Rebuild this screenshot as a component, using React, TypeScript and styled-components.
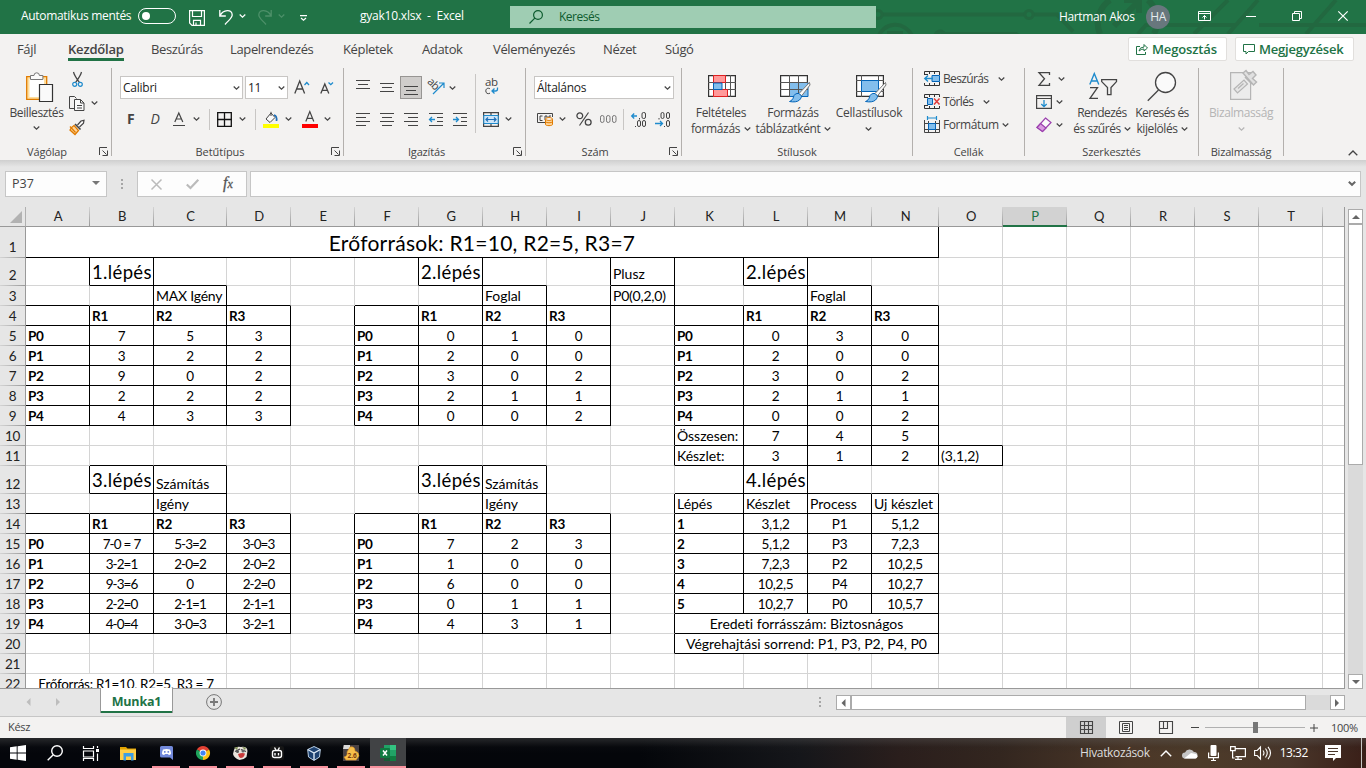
import React from 'react';
import styled, { createGlobalStyle, css } from 'styled-components';

const Global = createGlobalStyle`
  * { box-sizing: border-box; }
  body { margin: 0; overflow: hidden; font-family: "Open Sans", "Noto Sans", sans-serif; font-size: 12px; color: #444; }
  svg { display: block; flex: none; }
`;

/* ---------- shared parts ---------- */

const Window = styled.div`
  width: 1366px;
  height: 768px;
  display: flex;
  flex-direction: column;
  background: #e6e6e6;
  overflow: hidden;
`;

const Text = styled.span<{ $ml?: number; $mt?: number; $size?: number; $ls?: number; $weight?: number; $color?: string; $lh?: number }>`
  flex: none;
  white-space: pre;
  margin-left: ${(p) => p.$ml ?? 0}px;
  margin-top: ${(p) => p.$mt ?? 0}px;
  font-size: ${(p) => p.$size ?? 12}px;
  letter-spacing: ${(p) => p.$ls ?? -0.25}px;
  font-weight: ${(p) => p.$weight ?? 400};
  line-height: ${(p) => p.$lh ?? 16}px;
  color: ${(p) => p.$color ?? 'inherit'};
`;

const Glyph = styled.svg<{ $ml?: number; $mt?: number; $color?: string }>`
  margin-left: ${(p) => p.$ml ?? 0}px;
  margin-top: ${(p) => p.$mt ?? 0}px;
  overflow: visible;
  fill: none;
  stroke: ${(p) => p.$color ?? '#444'};
  stroke-width: 1;
`;

type IconProps = { w: number; h: number; ml?: number; mt?: number; color?: string; children: React.ReactNode };
const Icon = ({ w, h, ml, mt, color, children }: IconProps) => (
  <Glyph width={w} height={h} viewBox={`0 0 ${w} ${h}`} $ml={ml} $mt={mt} $color={color}>
    {children}
  </Glyph>
);

const Chevron = ({ ml, mt, color }: { ml?: number; mt?: number; color?: string }) => (
  <Icon w={7} h={4} ml={ml} mt={mt} color={color}>
    <path d="M.7.5 3.5 3.2 6.3.5" strokeWidth="1.2" />
  </Icon>
);

/* ---------- title bar ---------- */

const TitleBar = styled.header`
  height: 34px;
  flex: none;
  display: flex;
  align-items: center;
  background: #217346;
  color: #fff;
  position: relative;
`;

const Circuit = styled.svg`
  position: absolute;
  left: 876px;
  top: 0;
  overflow: hidden;
  fill: none;
  stroke: #226840;
`;

const TitlePart = styled.div<{ $w: number; $pl?: number; $pb?: number }>`
  width: ${(p) => p.$w}px;
  height: 34px;
  flex: none;
  display: flex;
  align-items: center;
  padding-left: ${(p) => p.$pl ?? 0}px;
  padding-bottom: ${(p) => p.$pb ?? 0}px;
  position: relative;
`;

const AutoSave = styled.div`
  width: 117px;
  flex: none;
  display: flex;
`;

const Toggle = styled.div`
  width: 38px;
  height: 16px;
  flex: none;
  border: 1px solid #fff;
  border-radius: 8px;
  padding: 3px 3px;
  &::before {
    content: '';
    display: block;
    width: 8px;
    height: 8px;
    border-radius: 50%;
    background: #fff;
  }
`;

const SearchBox = styled.div`
  width: 366px;
  height: 22px;
  flex: none;
  display: flex;
  align-items: center;
  padding-left: 19px;
  background: #9fcdb3;
  color: #0e5c2f;
  position: relative;
`;

const UserName = styled.div`
  width: 76px;
  flex: none;
  display: flex;
`;

const Avatar = styled.div`
  width: 24px;
  height: 24px;
  margin-left: 11px;
  border-radius: 50%;
  background: #68777d;
  display: flex;
  align-items: center;
  justify-content: center;
`;

/* ---------- tabs ---------- */

const TabRow = styled.nav`
  height: 32px;
  flex: none;
  display: flex;
  align-items: flex-start;
  background: #f3f2f1;
`;

const Tab = styled.div<{ $w: number; $active?: boolean; $ml: number }>`
  width: ${(p) => p.$w}px;
  margin-left: ${(p) => p.$ml}px;
  height: 27px;
  padding-top: 6px;
  flex: none;
  display: flex;
  ${(p) => p.$active && css`border-bottom: 3px solid #217346;`}
`;

const ShareButton = styled.div<{ $w: number; $ml: number }>`
  width: ${(p) => p.$w}px;
  height: 24px;
  margin: 3px 0 0 ${(p) => p.$ml}px;
  flex: none;
  display: flex;
  align-items: center;
  padding-left: 7px;
  background: #fff;
  border: 1px solid #e1dfdd;
  border-radius: 2px;
  color: #217346;
`;

/* ---------- ribbon ---------- */

const Ribbon = styled.section`
  height: 94px;
  flex: none;
  display: flex;
  background: #f3f2f1;
`;

const GroupBox = styled.div<{ $w: number }>`
  width: ${(p) => p.$w}px;
  height: 90px;
  flex: none;
  display: flex;
  flex-direction: column;
  position: relative;
  background: linear-gradient(#b3b0ad, #b3b0ad) right 2px / 1px 88px no-repeat;
  padding-right: 1px;
`;

const GroupBody = styled.div`
  height: 78px;
  flex: none;
  display: flex;
`;

const GroupFoot = styled.div<{ $lean: number }>`
  height: 16px;
  display: flex;
  justify-content: center;
  padding-right: ${(p) => p.$lean}px;
`;

const Launcher = styled.div`
  position: absolute;
  right: 4px;
  bottom: 0;
`;

const Stack = styled.div<{ $w?: number; $ml?: number; $pt?: number; $center?: boolean }>`
  display: flex;
  flex-direction: column;
  flex: none;
  ${(p) => p.$w !== undefined && css`width: ${p.$w}px;`}
  margin-left: ${(p) => p.$ml ?? 0}px;
  padding-top: ${(p) => p.$pt ?? 0}px;
  ${(p) => p.$center && css`align-items: center;`}
`;

const Row = styled.div<{ $h: number; $pl?: number; $mt?: number }>`
  height: ${(p) => p.$h}px;
  margin-top: ${(p) => p.$mt ?? 0}px;
  padding-left: ${(p) => p.$pl ?? 0}px;
  display: flex;
  align-items: center;
  flex: none;
`;

const Combo = styled.div<{ $w: number; $ml?: number }>`
  width: ${(p) => p.$w}px;
  height: 23px;
  margin-left: ${(p) => p.$ml ?? 0}px;
  flex: none;
  display: flex;
  align-items: center;
  justify-content: space-between;
  padding: 0 2px;
  background: #fff;
  border: 1px solid #c8c6c4;
  color: #222;
`;

const Rule = styled.div<{ $h: number; $ml?: number; $mt?: number }>`
  width: 1px;
  height: ${(p) => p.$h}px;
  margin-left: ${(p) => p.$ml ?? 0}px;
  margin-top: ${(p) => p.$mt ?? 0}px;
  background: #c8c6c4;
  flex: none;
`;

const Pressed = styled.div`
  width: 22px;
  height: 23px;
  margin-left: 6px;
  border: 1px solid #979593;
  background: #cfcdcb;
  padding: 9px 0 0 3px;
  flex: none;
`;

type GroupProps = { w: number; label: string; lean?: number; launcher?: boolean; ls?: number; children: React.ReactNode };
const Group = ({ w, label, lean = 0, launcher, ls = -0.15, children }: GroupProps) => (
  <GroupBox $w={w}>
    <GroupBody>{children}</GroupBody>
    <GroupFoot $lean={lean}><Text $size={11} $ls={ls}>{label}</Text></GroupFoot>
    {launcher && (
      <Launcher>
        <Icon w={9} h={9}><path d="M.5 8V.5H8M3.5 3.5l4 4M8.5 3.5v5h-5" /></Icon>
      </Launcher>
    )}
  </GroupBox>
);

const lines = (ws: number[], step = 4, left = false) =>
  ws.map((w, i) => <path key={i} d={`M${left ? 0 : (14 - w) / 2} ${i * step + 0.5}h${w}`} />);

const Brush = () => (
  <g>
    <path d="M29.5 7.5 19 18.5l2.5 2.5L30 10Z" fill="#fafafa" stroke="#777" />
    <path d="M19 18.5c-3-.5-5 1-5.5 3.5-.5 2.5-2 3.5-4 4.5 4 .8 8 .5 10-1.5 1.5-1.5 2-3 2-4Z" fill="#83beec" stroke="#0364b8" />
  </g>
);

const RibbonGroups = () => (
  <Ribbon>
    <Group w={112} label="Vágólap" lean={17} launcher>
      <Stack $w={53} $ml={10} $pt={6} $center>
        <Icon w={27} h={30} ml={6}>
          <path d="M.7 4.7h20v22.6H.7Z" fill="#ffdf9e" stroke="#e07b00" strokeWidth="1.3" />
          <path d="M3.5 7h14.5v18H3.5Z" fill="#fff" stroke="none" />
          <path d="M4.5 3.5h3.5a2.7 2.7 0 0 1 5.4 0h3.5v4h-12.4Z" fill="#fafafa" stroke="#777" />
          <path d="M13.5 12.5h13v17h-13Z" fill="#fafafa" stroke="#333" strokeWidth="1.2" />
        </Icon>
        <Text $ls={-0.4} $lh={22}>Beillesztés</Text>
        <Chevron mt={2} />
      </Stack>
      <Stack $ml={6} $pt={5}>
        <Icon w={11} h={16} ml={3}>
          <path d="M1.500 1c1 4 3.500 7 6 10.500M9.500 1c-1 4-3.500 7-6 10.500" strokeWidth="1.2" />
          <circle cx="2.7" cy="13.3" r="2" stroke="#1e8bcd" strokeWidth="1.2" />
          <circle cx="8.3" cy="13.3" r="2" stroke="#1e8bcd" strokeWidth="1.2" />
        </Icon>
        <Row $h={16} $mt={8}>
          <Icon w={16} h={15}>
            <path d="M5 12.5H.5V.5h5l2 2" /><path d="M5.5 3.5h6l3.5 3.5v7.5H5.5Z" fill="#fafafa" />
            <path d="M11.5 3.5v3.5h3.5M8 9.5h5M8 12h5" />
          </Icon>
          <Chevron ml={6} />
        </Row>
        <Icon w={16} h={16} mt={8}>
          <path d="m8.5 6 3.5-4 3-.7-.5 3-4 3.7" fill="#fafafa" strokeWidth="1.2" />
          <path d="m6 5 5.5 5.5" strokeWidth="1.6" />
          <path d="m5 6.5 4.5 5L6 15.5 1 11c1-2 1.5-3 4-4.5Z" fill="#ffd59a" stroke="#e07b00" strokeWidth="1.3" />
          <path d="m1 7.5 5.5 6" stroke="#e07b00" strokeWidth="1.3" />
        </Icon>
      </Stack>
    </Group>

    <Group w={232} label="Betűtípus" lean={15} launcher ls={-0.05}>
      <Stack $ml={8} $pt={10}>
        <Row $h={23}>
          <Combo $w={123}><Text>Calibri</Text><Chevron /></Combo>
          <Combo $w={43} $ml={2}><Text>11</Text><Chevron /></Combo>
          <Icon w={16} h={14} ml={6} mt={-2}>
            <path d="m.8 13.5 4.9-12.5 4.9 12.5M2.5 9h6.5" strokeWidth="1.3" /><path d="m10.5 5 2.3-2.5L15 5" stroke="#1e8bcd" strokeWidth="1.3" />
          </Icon>
          <Icon w={13} h={13} ml={10} mt={-1}>
            <path d="m.8 12.5 4-9.5 4 9.5M2.2 9.3h5.2" strokeWidth="1.3" /><path d="m8.5 1.5 2.3 2.2 2.2-2.2" stroke="#1e8bcd" strokeWidth="1.3" />
          </Icon>
        </Row>
        <Row $h={22} $mt={9}>
          <Text $ml={7} $size={14} $weight={700}>F</Text>
          <Text $ml={16} $size={14} $lh={18}><i>D</i></Text>
          <Icon w={12} h={14} ml={13}><path d="m1.8 10 4-9 4 9M3.2 7h5.2M0 13.5h12" strokeWidth="1.2" /></Icon>
          <Chevron ml={8} />
          <Rule $h={21} $ml={9} />
          <Icon w={15} h={15} ml={7}><path d="M.7.7h13.6v13.6H.7ZM7.5 0v15M0 7.5h15" stroke="#111" strokeWidth="1.3" /></Icon>
          <Chevron ml={7} />
          <Rule $h={21} $ml={9} />
          <Icon w={16} h={17} ml={7}>
            <path d="m3 8 5-6 4 4.5-5 5Z" fill="#fafafa" /><path d="M8 5V.8" />
            <path d="M11 4c2 .5 3 2.5 2.5 6" stroke="#1e6fb8" strokeWidth="1.7" />
            <path d="M0 13h16v4H0Z" fill="#ff0" stroke="none" />
          </Icon>
          <Chevron ml={6} />
          <Icon w={16} h={17} ml={10}>
            <path d="m3.8 10.5 4-10 4 10M5.2 7.3h5.2" strokeWidth="1.2" /><path d="M0 13h16v4H0Z" fill="#f00" stroke="none" />
          </Icon>
          <Chevron ml={6} />
        </Row>
      </Stack>
    </Group>

    <Group w={182} label="Igazítás" lean={16} launcher>
      <Stack $ml={12} $pt={10}>
        <Row $h={23}>
          <Icon w={14} h={14} mt={-2}>{lines([14, 10, 14])}</Icon>
          <Icon w={14} h={9} ml={10}>{lines([14, 10, 14])}</Icon>
          <Pressed><Icon w={14} h={9}>{lines([14, 10, 14])}</Icon></Pressed>
          <Icon w={17} h={17} ml={6}>
            <g transform="rotate(45 5 6)"><text x="-1.5" y="8.5" fontSize="11" letterSpacing="-.5" fill="#444" stroke="none">ab</text></g>
            <path d="M5 15 15.5 4.5M11 4h5v5" stroke="#1e8bcd" strokeWidth="1.2" />
          </Icon>
          <Chevron ml={4} />
        </Row>
        <Row $h={22} $mt={9}>
          <Icon w={14} h={13}>{lines([14, 10, 14, 10], 4, true)}</Icon>
          <Icon w={14} h={13} ml={10}>{lines([14, 10, 14, 10])}</Icon>
          <Icon w={14} h={13} ml={10}><path d="M0 .5h14M4 4.5h10M0 8.5h14M4 12.5h10" /></Icon>
          <Icon w={14} h={13} ml={11}><path d="M0 .5h14M8 4.5h6M8 8.5h6M0 12.5h14" /><path d="M6 6.5H.8M3 4 .5 6.5 3 9" stroke="#1e8bcd" strokeWidth="1.3" /></Icon>
          <Icon w={14} h={13} ml={10}><path d="M0 .5h14M8 4.5h6M8 8.5h6M0 12.5h14" /><path d="M0 6.5h5.2M3 4l2.5 2.5L3 9" stroke="#1e8bcd" strokeWidth="1.3" /></Icon>
        </Row>
      </Stack>
      <Rule $h={59} $ml={8} $mt={8} />
      <Stack $ml={7} $pt={12}>
        <Icon w={16} h={17} ml={2}>
          <text x="0" y="8" fontSize="11.5" letterSpacing="-.3" fill="#444" stroke="none">ab</text>
          <path d="M5 10.8C2.8 9.5.8 10.7.8 13s2 3.3 4.2 2.2" />
          <path d="M12.5 9.5v1.5q0 2-2 2H7M9.5 10.5 7 13l2.5 2.5" stroke="#1e8bcd" strokeWidth="1.3" />
        </Icon>
        <Row $h={22} $mt={13}>
          <Icon w={16} h={15}>
            <path d="M.6.6h14.8v13.8H.6ZM8 0v3M8 12v3" strokeWidth="1.2" />
            <path d="M.8 3.5h14.4v8H.8Z" fill="#cfe6f8" stroke="#1e8bcd" />
            <path d="M3 7.5h10M5 5.5l-2 2 2 2M11 5.5l2 2-2 2" stroke="#1e6fb8" strokeWidth="1.2" />
          </Icon>
          <Chevron ml={6} />
        </Row>
      </Stack>
    </Group>

    <Group w={156} label="Szám" lean={17} launcher>
      <Stack $ml={8} $pt={10}>
        <Row $h={23}><Combo $w={140}><Text>Általános</Text><Chevron /></Combo></Row>
        <Row $h={22} $mt={9}>
          <Icon w={17} h={14} ml={3}>
            <path d="M8 10.5H.5v-9h15V5" /><path d="M5.5 4H3v4.5h2.5M8 8V4h2v4M12 7V4h2" />
            <path d="M8.5 7v5.5c0 1.5 7 1.5 7 0V7" fill="#ffd59a" stroke="#e07b00" />
            <ellipse cx="12" cy="7" rx="3.5" ry="1.4" fill="#fff" stroke="#e07b00" />
            <path d="M8.5 9.8c1 1.3 6 1.3 7 0" stroke="#e07b00" />
          </Icon>
          <Chevron ml={5} />
          <Icon w={16} h={14} ml={10}>
            <circle cx="3.8" cy="3.8" r="2.9" strokeWidth="1.3" /><circle cx="12.2" cy="10.2" r="2.9" strokeWidth="1.3" /><path d="M12.5.5 3.5 13.5" strokeWidth="1.2" />
          </Icon>
          <Icon w={17} h={8} ml={8} color="#777"><rect x=".5" y=".5" width="3.5" height="7" rx="1.7" /><rect x="6.5" y=".5" width="3.5" height="7" rx="1.7" /><rect x="12.5" y=".5" width="3.5" height="7" rx="1.7" /></Icon>
          <Rule $h={21} $ml={6} />
          <Icon w={16} h={15} ml={7}>
            <path d="M6 4H.8M3.2 1.5.7 4l2.5 2.5" stroke="#1e8bcd" strokeWidth="1.3" />
            <path d="M8.5 6v1.5M4.5 14v1" /><rect x="11" y=".5" width="3.5" height="6" rx="1.5" /><rect x="6.5" y="8.5" width="3" height="6" rx="1.5" /><rect x="11.5" y="8.5" width="3" height="6" rx="1.5" />
          </Icon>
          <Icon w={16} h={15} ml={8}>
            <path d="M0 11.5h7M5 9l2.5 2.5L5 14" stroke="#1e8bcd" strokeWidth="1.3" />
            <path d="M4 6v1.5M9.5 14v1" /><rect x="6" y=".5" width="3" height="6" rx="1.5" /><rect x="11.5" y=".5" width="3" height="6" rx="1.5" /><rect x="11.5" y="8.5" width="3" height="6" rx="1.5" />
          </Icon>
        </Row>
      </Stack>
    </Group>

    <Group w={231} label="Stílusok" ls={-0.05}>
      <Stack $w={62} $ml={8} $pt={9} $center>
        <Icon w={28} h={22} ml={2}>
          <path d="M.6.6h26.8v20.8H.6Z" fill="#fff" stroke="#333" strokeWidth="1.2" />
          <path d="M0 7.5h28M0 14.5h28M5.5 0v22M17.5 0v22M22.5 0v22" stroke="#555" />
          <path d="M5.5.5h12v7h-12ZM5.5 14.5h14v7h-14Z" fill="#ff9a9a" stroke="#e02020" />
          <path d="M5.5 8h8.5v6.5h-8.5Z" fill="#83beec" stroke="#0364b8" />
        </Icon>
        <Text $mt={8} $ls={-0.3}>Feltételes</Text>
        <Row $h={16}><Text $ls={-0.35}>formázás</Text><Chevron ml={4} /></Row>
      </Stack>
      <Stack $w={76} $ml={3} $pt={9} $center>
        <Icon w={30} h={27} ml={4}>
          <path d="M.6.6h26.8v20.8H.6Z" fill="#fff" stroke="#333" strokeWidth="1.2" />
          <path d="M9.5 7.5H28v14H9.5Z" fill="#83beec" stroke="#0364b8" />
          <path d="M0 7.5h28M0 14.5h28M9.5 0v22M18.5 0v22" stroke="#555" />
          <Brush />
        </Icon>
        <Text $mt={3} $ls={-0.35}>Formázás</Text>
        <Row $h={16}><Text $ls={-0.35}>táblázatként</Text><Chevron ml={3} /></Row>
      </Stack>
      <Stack $w={68} $ml={4} $pt={9} $center>
        <Icon w={30} h={27} ml={3}>
          <path d="M.6.6h26.8v20.8H.6Z" fill="#fff" stroke="#333" strokeWidth="1.2" />
          <path d="M0 5.5h28M0 16.5h28M5.5 0v22M22.5 0v22" stroke="#555" />
          <path d="M5.5 5.5h17v11h-17Z" fill="#83beec" stroke="#0364b8" />
          <Brush />
        </Icon>
        <Text $mt={3} $ls={-0.25}>Cellastílusok</Text>
        <Chevron mt={6} ml={-1} />
      </Stack>
    </Group>

    <Group w={112} label="Cellák">
      <Stack $ml={11} $pt={4}>
        <Row $h={17}>
          <Icon w={16} h={15}>
            <path d="M.5 3V.5h15V4M.5 12v2.5h15V11M5.5 1v2M10.5 1v2M5.5 12v2M10.5 12v2M0 3.5h4" stroke="#333" />
            <path d="M8 4.5h7.5v6H8Z" fill="#83beec" stroke="#0364b8" /><path d="M9 7.5H.8M4 4.5.8 7.5l3.2 3" stroke="#1e8bcd" strokeWidth="1.4" />
          </Icon>
          <Text $ml={3} $ls={-0.65}>Beszúrás</Text><Chevron ml={10} />
        </Row>
        <Row $h={17} $mt={6}>
          <Icon w={16} h={15}>
            <path d="M.5 3V.5h15V3M.5 12v2.5h15V12M5.5 1v2M10.5 1v2M5.5 12v2M10.5 12v2M0 3.5h4M0 11.5h4" stroke="#333" />
            <path d="M3.5 4.5h5v6h-5Z" fill="#83beec" stroke="#0364b8" /><path d="m10 4.5 5.5 6M15.5 4.5l-5.5 6" stroke="#e03a3a" strokeWidth="1.5" />
          </Icon>
          <Text $ml={3} $ls={-0.65}>Törlés</Text><Chevron ml={10} />
        </Row>
        <Row $h={17} $mt={6}>
          <Icon w={16} h={17}>
            <path d="M3.5 2h9M3.5 0v4M12.5 0v4" stroke="#1e8bcd" strokeWidth="1.2" />
            <path d="M.5 4v12.5h15V4M0 7.5h16M0 13.5h16M4.5 5v11M11.5 5v11" stroke="#444" />
            <path d="M4.5 7.5h7v6h-7Z" fill="#83beec" stroke="#0364b8" />
          </Icon>
          <Text $ml={3} $ls={-0.4}>Formátum</Text><Chevron ml={3} />
        </Row>
      </Stack>
    </Group>

    <Group w={174} label="Szerkesztés" ls={-0.1}>
      <Stack $ml={11} $pt={4}>
        <Row $h={17}><Icon w={13} h={14} ml={2}><path d="M11.5 3V.7H1l5.5 6L1 13.3h10.5V11" strokeWidth="1.3" /></Icon><Chevron ml={7} /></Row>
        <Row $h={17} $mt={6}>
          <Icon w={16} h={14}><path d="M.6.6h14.8v12.8H.6ZM0 3.5h16" strokeWidth="1.2" /><path d="M8 5v7M5.3 9 8 11.7 10.7 9" stroke="#1e8bcd" strokeWidth="1.3" /></Icon>
          <Chevron ml={4} />
        </Row>
        <Row $h={17} $mt={6}>
          <Icon w={16} h={16} color="#9b3fae"><path d="M9.5 1 15 5.5 6.5 14.5 1 10.5Z" fill="#fafafa" strokeWidth="1.2" /><path d="m4.5 6.5 5.5 4.5-3.5 3.5L1 10.5Z" fill="#d99be0" strokeWidth="1.2" /></Icon>
          <Chevron ml={4} />
        </Row>
      </Stack>
      <Stack $w={58} $ml={8} $pt={7} $center>
        <Icon w={28} h={27} ml={1}>
          <path d="m.8 11.5 4.5-11 4.5 11M2.3 8h6" stroke="#1e8bcd" strokeWidth="1.4" />
          <path d="M1 14.6h7.5L1 25.4h8" strokeWidth="1.3" />
          <path d="M12.7 6.6h14.8v2l-5.5 6v7h-3.5v-7l-5.8-6Z" strokeWidth="1.3" />
        </Icon>
        <Text $mt={5} $ls={-0.5}>Rendezés</Text>
        <Row $h={16}><Text $ls={-0.45}>és szűrés</Text><Chevron ml={3} /></Row>
      </Stack>
      <Stack $w={58} $ml={2} $pt={6} $center>
        <Icon w={30} h={30}>
          <circle cx="18.5" cy="10.5" r="10" fill="#fafafa" strokeWidth="1.3" /><path d="M11.5 18 .8 28.8" strokeWidth="1.3" />
        </Icon>
        <Text $mt={3} $ls={-0.6}>Keresés és</Text>
        <Row $h={16}><Text $ls={-0.4}>kijelölés</Text><Chevron ml={3} /></Row>
      </Stack>
    </Group>

    <Group w={85} label="Bizalmasság" ls={-0.2}>
      <Stack $w={84} $pt={4} $center>
        <Icon w={28} h={30} ml={5} color="#b5b5b5">
          <path d="M.6 2.6h20v26.8H.6Z" fill="#ececec" strokeWidth="1.2" />
          <path d="m4 19 10-9 3.5 4-10 9ZM8 18.5l5.5-5" fill="#e6e6e6" strokeWidth="1.2" />
          <path d="m13 3 3-2.5 3 4 4-3 3 3.5-3.5 3.5 4 3.5-3 3Z" fill="#e0e0e0" strokeWidth="1.4" /><path d="m15 7 7 7" strokeWidth="1.5" />
        </Icon>
        <Text $mt={5} $ls={-0.4} $color="#b5b5b5">Bizalmasság</Text>
        <Chevron mt={6} color="#b5b5b5" />
      </Stack>
    </Group>
    <Icon w={10} h={6} ml={64} mt={84}><path d="M.7 5.3 5 1l4.3 4.3" strokeWidth="1.3" /></Icon>
  </Ribbon>
);

/* ---------- formula bar ---------- */

const FormulaBar = styled.div`
  height: 47px;
  flex: none;
  display: flex;
  padding: 11px 0 0 5px;
  background: linear-gradient(#cfcfcf, #e6e6e6 7px);
`;

const Field = styled.div<{ $w: number; $ml?: number; $pl?: number }>`
  width: ${(p) => p.$w}px;
  height: 26px;
  margin-left: ${(p) => p.$ml ?? 0}px;
  padding-left: ${(p) => p.$pl ?? 0}px;
  flex: none;
  display: flex;
  align-items: center;
  background: #fdfdfd;
  border: 1px solid #c6c6c6;
`;

const NameText = styled.div`
  width: 80px;
  flex: none;
  display: flex;
`;

const Fx = styled.span`
  margin-left: 24px;
  margin-top: -2px;
  font: italic 400 16px/18px "Liberation Serif", serif;
  -webkit-text-stroke: 0.3px #555;
  color: #555;
  small { font-size: 12px; }
`;

const Dots = ({ ml, mt }: { ml: number; mt: number }) => (
  <Icon w={2} h={10} ml={ml} mt={mt}><path d="M0 0h2v2H0ZM0 4h2v2H0ZM0 8h2v2H0Z" fill="#a6a6a6" stroke="none" /></Icon>
);

/* ---------- sheet ---------- */

const COLS: [string, number][] = [
  ['A', 64], ['B', 64], ['C', 73], ['D', 64], ['E', 64], ['F', 64], ['G', 64], ['H', 64], ['I', 64], ['J', 64],
  ['K', 69], ['L', 64], ['M', 64], ['N', 67], ['O', 64], ['P', 64], ['Q', 64], ['R', 64], ['S', 64], ['T', 64], ['', 22],
];
const ROWS = [31, 28, 20, 20, 20, 20, 20, 20, 20, 20, 20, 28, 20, 20, 20, 20, 20, 20, 20, 20, 20, 15];

const SheetArea = styled.div`
  height: 482px;
  flex: none;
  display: flex;
`;

const SheetBox = styled.div`
  width: 1345px;
  height: 482px;
  flex: none;
  border-bottom: 1px solid #999;
  border-right: 1px solid #999;
  overflow: hidden;
  background: #e6e6e6;
`;

const track = [26, ...COLS.map((c) => c[1])].map((w) => `${w}px`).join(' ');

const Grid = styled.div`
  display: grid;
  grid-template-columns: ${track};
  grid-template-rows: 20px ${ROWS.map((h) => `${h}px`).join(' ')};
  font-family: Lato, sans-serif;
  font-size: 13.5px;
  letter-spacing: -0.3px;
  color: #000;
`;

const ColHead = styled.div<{ $active?: boolean }>`
  display: flex;
  align-items: flex-start;
  justify-content: center;
  font-size: 13px;
  line-height: 18px;
  background: linear-gradient(#d4d4d4, #999) right / 1px 100% no-repeat, ${(p) => (p.$active ? '#d2d2d2' : '#e6e6e6')};
  border-bottom: ${(p) => (p.$active ? '2px solid #217346' : '1px solid #999')};
  color: ${(p) => (p.$active ? '#217346' : '#222')};
`;

const Corner = styled.div`
  border-right: 1px solid #b0b0b0;
  border-bottom: 1px solid #999;
  display: flex;
  align-items: flex-end;
  justify-content: flex-end;
  padding: 0 3px 3px 0;
  &::after {
    content: '';
    border-left: 12px solid transparent;
    border-bottom: 12px solid #b2b2b2;
  }
`;

const RowHead = styled.div<{ $clip?: boolean; $lift?: number }>`
  display: flex;
  align-items: ${(p) => (p.$clip ? 'flex-start' : 'flex-end')};
  justify-content: center;
  line-height: 18px;
  background: linear-gradient(to right, #d4d4d4, #999) bottom / 100% ${(p) => (p.$clip ? 0 : 1)}px no-repeat, #e6e6e6;
  border-right: 1px solid #999;
  padding-bottom: ${(p) => (p.$clip ? 0 : 1 + (p.$lift ?? 0))}px;
  padding-top: ${(p) => (p.$clip ? 1 : 0)}px;
  color: #222;
  overflow: hidden;
`;

type CellKind = 'word' | 'number' | 'formula' | 'step' | 'title';

const kinds = {
  word: css`font-size: 14px; letter-spacing: -0.03px;`,
  number: css`letter-spacing: -0.3px;`,
  formula: css`letter-spacing: -0.95px; word-spacing: 0.5px;`,
  step: css`font-size: 18.5px; line-height: 25px; letter-spacing: 0.35px;`,
  title: css`font-size: 21px; line-height: 28px; letter-spacing: 0.25px;`,
};

const Cell = styled.div<{ $r: boolean; $b: boolean; $center?: boolean; $bold?: boolean; $kind: CellKind; $tight?: boolean; $span: number; $clip?: boolean; $lift?: number }>`
  display: flex;
  align-items: ${(p) => (p.$clip ? 'flex-start' : 'flex-end')};
  justify-content: ${(p) => (p.$center ? 'center' : 'flex-start')};
  padding: ${(p) => (p.$clip ? 1 : 0)}px 0 ${(p) => p.$lift ?? 0}px ${(p) => (p.$center ? 0 : 2)}px;
  grid-column: span ${(p) => p.$span};
  background: #fff;
  border-right: 1px solid ${(p) => (p.$r ? '#000' : '#d4d4d4')};
  border-bottom: 1px solid ${(p) => (p.$b ? '#000' : '#d4d4d4')};
  white-space: pre;
  overflow: hidden;
  font-weight: ${(p) => (p.$bold ? 700 : 400)};
  line-height: 18px;
  ${(p) => kinds[p.$kind]}
  ${(p) => p.$tight && css`letter-spacing: -0.22px;`}
`;

type CellData = { t: string; bold?: boolean; center?: boolean; kind?: CellKind; tight?: boolean; span?: number };
const data: Record<string, CellData> = {};
const put = (col: string, row: number, t: string, o: Partial<CellData> = {}) => { data[col + row] = { t, ...o }; };
const value = (t: string): Partial<CellData> => ({ center: true, kind: t.includes('=') ? 'formula' : 'number' });

put('A', 1, 'Erőforrások: R1=10, R2=5, R3=7', { center: true, kind: 'title', span: 14 });
put('A', 22, 'Erőforrás: R1=10, R2=5, R3 = 7', { center: true, kind: 'number', span: 3 });
put('K', 19, 'Eredeti forrásszám: Biztosnágos', { center: true, kind: 'word', span: 4 });
put('K', 20, 'Végrehajtási sorrend: P1, P3, P2, P4, P0', { center: true, kind: 'word', span: 4 });
([['B', 2, '1'], ['G', 2, '2'], ['L', 2, '2'], ['B', 12, '3'], ['G', 12, '3'], ['L', 12, '4']] as [string, number, string][])
  .forEach(([c, r, n]) => put(c, r, `${n}.lépés`, { kind: 'step' }));
([['H3', 'Foglal'], ['M3', 'Foglal'], ['J2', 'Plusz'], ['C12', 'Számítás'], ['C13', 'Igény'],
  ['H12', 'Számítás'], ['H13', 'Igény'], ['K10', 'Összesen:'], ['K11', 'Készlet:'],
  ['K13', 'Lépés'], ['L13', 'Készlet'], ['M13', 'Process'], ['N13', 'Uj készlet']] as [string, string][])
  .forEach(([k, t]) => { data[k] = { t, kind: 'word' }; });
put('C', 3, 'MAX Igény', { kind: 'word', tight: true });
put('J', 3, 'P0(0,2,0)', { kind: 'word', tight: true });
put('O', 11, '(3,1,2)', { kind: 'word' });

const block = (cols: string, top: number, rows: string[][]) => {
  ['R1', 'R2', 'R3'].forEach((t, i) => put(cols[i + 1], top, t, { bold: true }));
  rows.forEach((vals, i) => {
    put(cols[0], top + 1 + i, `P${i}`, { bold: true });
    vals.forEach((v, j) => put(cols[j + 1], top + 1 + i, v, value(v)));
  });
};
const parse = (s: string) => s.split('/').map((r) => r.split('|'));
block('ABCD', 4, parse('7|5|3/3|2|2/9|0|2/2|2|2/4|3|3'));
block('FGHI', 4, parse('0|1|0/2|0|0/3|0|2/2|1|1/0|0|2'));
block('KLMN', 4, parse('0|3|0/2|0|0/3|0|2/2|1|1/0|0|2'));
block('ABCD', 14, parse('7-0 = 7|5-3=2|3-0=3/3-2=1|2-0=2|2-0=2/9-3=6|0|2-2=0/2-2=0|2-1=1|2-1=1/4-0=4|3-0=3|3-2=1'));
block('FGHI', 14, parse('7|2|3/1|0|0/6|0|0/0|1|1/4|3|1'));
parse('7|4|5/3|1|2').forEach((r, i) => r.forEach((v, j) => put('LMN'[j], 10 + i, v, value(v))));
parse('3,1,2|P1|5,1,2/5,1,2|P3|7,2,3/7,2,3|P2|10,2,5/10,2,5|P4|10,2,7/10,2,7|P0|10,5,7').forEach((r, i) => {
  put('K', 14 + i, String(i + 1), { bold: true });
  r.forEach((v, j) => put('LMN'[j], 14 + i, v, value(v)));
});

/* Outlined ranges: first column, first row, last column, last row. */
const OUTLINES: [string, number, string, number][] = [
  ['A', 1, 'N', 1], ['B', 2, 'B', 2], ['G', 2, 'G', 2], ['L', 2, 'L', 2], ['J', 2, 'J', 3], ['C', 3, 'C', 3], ['H', 3, 'H', 3], ['M', 3, 'M', 3],
  ['A', 4, 'D', 9], ['F', 4, 'I', 9], ['K', 4, 'N', 11], ['O', 11, 'O', 11], ['B', 12, 'C', 12], ['G', 12, 'H', 12], ['L', 12, 'L', 12],
  ['C', 13, 'C', 13], ['H', 13, 'H', 13], ['A', 14, 'D', 19], ['F', 14, 'I', 19], ['K', 13, 'N', 20],
];
const colIndex = (c: string) => c.charCodeAt(0) - 65;
const outlined = (c: number, r: number) =>
  OUTLINES.some(([c1, r1, c2, r2]) => c >= colIndex(c1) && c <= colIndex(c2) && r >= r1 && r <= r2);

const SheetRow = ({ row }: { row: number }) => {
  const cells: React.ReactNode[] = [];
  const clip = row === ROWS.length;
  for (let c = 0; c < COLS.length;) {
    const d = data[String.fromCharCode(65 + c) + row];
    const span = d?.span ?? 1;
    const last = c + span - 1;
    cells.push(
      <Cell key={c} $span={span} $center={d?.center} $bold={d?.bold} $kind={d?.kind ?? 'number'} $tight={d?.tight} $clip={clip}
        $lift={row === 2 && d?.kind === 'word' ? 2 : 0}
        $r={outlined(last, row) || outlined(last + 1, row)} $b={outlined(c, row) || outlined(c, row + 1)}>
        {d?.t}
      </Cell>,
    );
    c += span;
  }
  return <><RowHead $clip={clip} $lift={row <= 2 ? 1 : 0}>{row}</RowHead>{cells}</>;
};

const VScroll = styled.div`
  width: 15px;
  height: 480px;
  margin: 2px 0 0 3px;
  flex: none;
  display: flex;
  flex-direction: column;
  background: #dadada;
`;

const ScrollButton = styled.div`
  width: 15px;
  height: 15px;
  flex: none;
  display: flex;
  align-items: center;
  justify-content: center;
  background: #fff;
  border: 1px solid #ababab;
`;

const VThumb = styled.div`
  height: 241px;
  background: #fff;
  border: 1px solid #ababab;
  margin-bottom: auto;
`;

const HScroll = styled.div`
  width: 509px;
  height: 15px;
  margin: 6px 0 0 15px;
  flex: none;
  display: flex;
  background: #dadada;
`;

const HThumb = styled.div`
  width: 455px;
  background: #fff;
  border: 1px solid #ababab;
  margin-right: auto;
`;

const Arrow = ({ d, ml, mt, color = '#666' }: { d: 'up' | 'down' | 'left' | 'right'; ml?: number; mt?: number; color?: string }) => {
  const shapes = { up: 'M0 4h8L4 0Z', down: 'M0 0h8L4 4Z', left: 'M4.5 0v8L.5 4Z', right: 'M0 0v8l4-4Z' };
  const v = d === 'up' || d === 'down';
  return <Icon w={v ? 8 : 5} h={v ? 4 : 8} ml={ml} mt={mt}><path d={shapes[d]} fill={color} stroke="none" /></Icon>;
};

const SheetTabs = styled.div`
  height: 28px;
  flex: none;
  display: flex;
  border-bottom: 1px solid #c6c6c6;
`;

const SheetTab = styled.div`
  width: 73px;
  height: 25px;
  margin: -1px 0 0 39px;
  flex: none;
  display: flex;
  justify-content: center;
  padding-top: 5px;
  background: #fff;
  border: solid #999;
  border-width: 0 1px;
  box-shadow: inset 0 -2px #217346;
  position: relative;
`;

const StatusBar = styled.div`
  height: 21px;
  flex: none;
  display: flex;
  align-items: center;
  background: #f3f2f1;
`;

const ViewButton = styled.div<{ $active?: boolean }>`
  width: 40px;
  height: 21px;
  flex: none;
  display: flex;
  align-items: center;
  justify-content: center;
  background: ${(p) => (p.$active ? '#cfcfcf' : 'transparent')};
`;

/* ---------- taskbar ---------- */

const TaskbarBox = styled.footer`
  height: 30px;
  flex: none;
  display: flex;
  align-items: center;
  color: #fff;
  background:
    linear-gradient(rgba(90, 90, 90, 0.4), rgba(40, 40, 40, 0.1) 9px, transparent 16px),
    linear-gradient(to right, #04060b 0, #04060a 640px, #15161a 800px, #2a1e1c 900px, #33261f 1000px, #4b3728 1130px, #4d3b29 1200px, #49362a 1290px, #3a1f18 1366px);
`;

const TaskItem = styled.div<{ $w?: number; $ml?: number; $line?: boolean; $active?: boolean }>`
  width: ${(p) => p.$w ?? 28}px;
  height: 30px;
  margin-left: ${(p) => p.$ml ?? 9}px;
  flex: none;
  display: flex;
  align-items: center;
  justify-content: center;
  background: ${(p) => (p.$active ? '#414345' : 'transparent')};
  ${(p) => p.$line && css`box-shadow: inset 0 -2px #f7919d;`}
`;

const Taskbar = () => (
  <TaskbarBox>
    <TaskItem $w={16} $ml={10}><Icon w={16} h={16}><path d="M0 2.3 6.7 1.3v6.2H0ZM7.6 1.2 16 0v7.5H7.6ZM0 8.4h6.7v6.3L0 13.7ZM7.6 8.4H16V16l-8.4-1.2Z" fill="#fff" stroke="none" /></Icon></TaskItem>
    <TaskItem $w={17} $ml={20}><Icon w={16} h={16} color="#fff"><circle cx="10" cy="6" r="5.3" strokeWidth="1.4" /><path d="M6 10 .7 15.3" strokeWidth="1.4" /></Icon></TaskItem>
    <TaskItem $w={17} $ml={19}>
      <Icon w={16} h={15} color="#fff"><path d="M.5 0v2.5h10V0M.5 5h10v6H.5ZM.5 15v-2.5h10V15M14.5 0v2M14.5 7.5V15" strokeWidth="1.2" /><path d="M13 3h3v3h-3Z" fill="#fff" stroke="none" /></Icon>
    </TaskItem>
    <TaskItem $w={17} $ml={21}>
      <Icon w={17} h={15}><g stroke="none"><path d="M0 1h6l1.5 1.5H16V5H0Z" fill="#e0a200" /><path d="M0 3.5h16V14H0Z" fill="#ffcf48" /><path d="M3.5 7h10v7.5H11v-4H6v4H3.5Z" fill="#3c9ee5" /></g></Icon>
    </TaskItem>
    <TaskItem $ml={15} $line>
      <Icon w={13} h={14}><g stroke="none"><path d="M1.5 0h10q1.5 0 1.5 1.5V14l-3-2.5H1.5Q0 11.5 0 10V1.5Q0 0 1.5 0Z" fill="#7289da" /><path d="M3 3.5q3.5-1 7 0 1 2 1 4.5-1 1-2.2 1L8 8H5l-.8 1Q3 9 2 8q0-2.5 1-4.5Z" fill="#fff" /><path d="M4 5h1.6v1.7H4ZM7.5 5h1.6v1.7H7.5Z" fill="#7289da" /></g></Icon>
    </TaskItem>
    <TaskItem $line>
      <Icon w={14} h={14}><g stroke="none"><path d="M7 7 .9 3.5A7 7 0 0 1 13.1 3.5Z" fill="#e34133" /><path d="M7 7 13.1 3.5A7 7 0 0 1 7 14Z" fill="#fbc116" /><path d="M7 7 7 14A7 7 0 0 1 .9 3.5Z" fill="#1fa35b" /><circle cx="7" cy="7" r="3.4" fill="#fff" /><circle cx="7" cy="7" r="2.6" fill="#4285f4" /></g></Icon>
    </TaskItem>
    <TaskItem $line>
      <Icon w={15} h={14}><g stroke="none"><path d="M1 4Q2 0 8 1q6-1 6.5 4l-1 6q-3 3-7 3Q1 12 0 8Z" fill="#e9e4dc" /><path d="M1 1.5 5 1 4 4ZM9 1l4 .5-1 2.5Z" fill="#7a8b50" /><path d="M2 5.5 7 3M8 3.5l5 2" stroke="#444" strokeWidth="1.2" /><circle cx="4.5" cy="5.5" r="1.5" fill="#555" /><circle cx="10" cy="5" r="1.5" fill="#666" /><path d="M5 8q4-1.5 7-.5-1 4.5-4.5 4.5Q5.5 11 5 8Z" fill="#c93a3a" /></g></Icon>
    </TaskItem>
    <TaskItem $line>
      <Icon w={14} h={14}><rect width="14" height="14" rx="2" fill="#151515" stroke="none" /><rect x="2.5" y="4.5" width="9" height="7" rx="2" stroke="#fff" strokeWidth="1.4" /><path d="M4.5 1.5 6 4M9.5 1.5 8 4M5 7v2.5M8.5 7v2.5" stroke="#fff" strokeWidth="1.4" /></Icon>
    </TaskItem>
    <TaskItem $line>
      <Icon w={14} h={15}><path d="M7 .5 13.3 3.5 12.5 11 7 14.5 1.5 11 .7 3.5Z" fill="#1d4170" stroke="#b9cfe6" /><path d="M.7 3.5 7 7l6.3-3.5M7 7v7" stroke="#dce9f5" strokeWidth="1.4" /></Icon>
    </TaskItem>
    <TaskItem $line>
      <Icon w={16} h={16}>
        <path d="M0 0h16v16H0Z" fill="#4a4244" stroke="none" /><path d="M1 0h6v4H0Z" fill="#d9d9d9" stroke="none" />
        <path d="M7 2q5-1 5 4 4 1 4 5l-3 4H3l-2-3q4-1 3-5Z" fill="#f8c04b" stroke="#d98d20" strokeWidth=".6" />
        <text x="4.5" y="13" fontSize="6.5" fontWeight="700" fill="#7a3b10" stroke="none">2.6</text>
      </Icon>
    </TaskItem>
    <TaskItem $w={36} $ml={5} $line $active>
      <Icon w={16} h={16}><g stroke="none"><path d="M4 0h12v16H4Z" fill="#21a366" /><path d="M10 0h6v5h-6Z" fill="#33c481" /><path d="M4 5h6v6H4Z" fill="#107c41" /><path d="M4 11h12v5H4Z" fill="#185c37" /><path d="M10 11h6v5h-6Z" fill="#107c41" /><rect y="3" width="10" height="10" rx="1" fill="#0f7a40" /></g><path d="m3 5.5 4 5M7 5.5l-4 5" stroke="#fff" strokeWidth="1.5" /></Icon>
    </TaskItem>
    <Text $ml={674} $color="#ddd" $ls={-0.35}>Hivatkozások</Text>
    <Icon w={12} h={7} ml={10} color="#fff"><path d="M.8 6.3 6 1l5.2 5.3" strokeWidth="1.4" /></Icon>
    <Icon w={16} h={11} ml={10}><path d="M3 10.5a3 3 0 0 1 0-6A5 5 0 0 1 12 4a3.3 3.3 0 0 1 1 6.5Z" fill="#c4c4c4" stroke="none" /><path d="m2 10.5 7-5.5 5 1a2.5 2.5 0 0 1 0 4.5Z" fill="#fff" stroke="none" /></Icon>
    <Icon w={11} h={16} ml={10} color="#fff"><rect x="2.5" y="0" width="6" height="11" rx="1" fill="#fff" stroke="none" /><path d="M.6 7.5v5.2h9.8V7.5M5.5 13v3M3 15.5h5" strokeWidth="1.2" /></Icon>
    <Icon w={16} h={14} ml={11} color="#fff"><path d="M5 2.6h10.4v8H5.5M8 11v2.5M5 13.4h7M.6.6h4.6v4H.6ZM2.6 5v7h2" strokeWidth="1.2" /></Icon>
    <Icon w={17} h={14} ml={8} color="#fff"><path d="M.6 4.5h2.6L6.5 1v12L3.2 9.5H.6ZM9 4.5q2 2.5 0 5M11.5 2.5q3.5 4.5 0 9M14 .8q5 6.2 0 12.4" strokeWidth="1.1" /></Icon>
    <Text $ml={9} $ls={-0.5}>13:32</Text>
    <Icon w={16} h={16} ml={17}><path d="M0 0h16v13H11l-3 3v-3H0Z" fill="#fff" stroke="none" /><path d="M3 3.5h10M3 6.5h10M3 9.5h7" stroke="#49362a" /></Icon>
    <Rule $h={30} $ml={20} />
  </TaskbarBox>
);

/* ---------- page ---------- */

const TABS: [string, number, number, boolean?][] = [
  ['Fájl', 17, 20], ['Kezdőlap', 31, 56, true], ['Beszúrás', 27, 51], ['Lapelrendezés', 28, 84], ['Képletek', 29, 51],
  ['Adatok', 28, 42], ['Véleményezés', 29, 81], ['Nézet', 29, 34], ['Súgó', 28, 30],
];

export default function App() {
  return (
    <Window>
      <Global />
      <TitleBar>
        <Circuit width="490" height="34">
          <path d="M6 14.5h143M158 14.5h23l16 17M262 34l8-9h90M318 34l34-34M352 34l30-34M383 25h107M430 34l30-34" strokeWidth="4" />
          <circle cx="2" cy="14.5" r="4" strokeWidth="3" /><circle cx="153" cy="14.5" r="4" strokeWidth="3" />
          <path d="M2 38a18 18 0 0 1 34-2M60 38a4 4 0 0 1 8-4h72l4 3" strokeWidth="4" />
          <path d="M11 31h16v3H11Z" fill="#226840" stroke="none" />
          <path d="M224 34a28 28 0 0 1 10-34M272 0a28 28 0 0 1 6 34M238 26l24-24M248 0h15v13" strokeWidth="6" />
        </Circuit>
        <TitlePart $w={360} $pl={21} $pb={2}>
          <AutoSave><Text $ls={-0.32}>Automatikus mentés</Text></AutoSave>
          <Toggle />
          <Icon w={16} h={16} ml={13} mt={3} color="#fff"><path d="M.6.6h14.8v14.8H3L.6 13ZM3.5.6v5.9h9V.6M4.5 15.4v-5h7v5M7 12.5v3" strokeWidth="1.2" /></Icon>
          <Icon w={14} h={16} ml={14} mt={2} color="#fff"><path d="M.8 1v6h6M1.2 6.5C4 .5 13.2-.3 13.2 6c0 3-3.2 5-7.2 9.5" strokeWidth="1.3" /></Icon>
          <Chevron ml={6} color="#fff" />
          <Icon w={14} h={16} ml={12} mt={2} color="#4d9069"><path d="M13.2 1v6h-6M12.8 6.5C10 .5.8-.3.8 6c0 3 3.2 5 7.2 9.5" strokeWidth="1.3" /></Icon>
          <Chevron ml={6} color="#4d9069" />
          <Icon w={7} h={6} ml={15} mt={3} color="#fff"><path d="M0 .6h7M1 3l2.5 2.3L6 3" strokeWidth="1.2" /></Icon>
        </TitlePart>
        <TitlePart $w={150} $pb={2}><Text $ls={-0.22}>gyak10.xlsx  -  Excel</Text></TitlePart>
        <SearchBox>
          <Icon w={14} h={14} color="#0e5c2f"><circle cx="9" cy="5" r="4.4" strokeWidth="1.2" /><path d="M5.8 8.2.5 13.5" strokeWidth="1.2" /></Icon>
          <Text $ml={16} $ls={-0.5}>Keresés</Text>
        </SearchBox>
        <TitlePart $w={490} $pl={183}>
          <UserName><Text $ls={-0.35}>Hartman Akos</Text></UserName>
          <Avatar><Text $color="#e6ecee" $ls={-0.5}>HA</Text></Avatar>
          <Icon w={13} h={10} ml={28} mt={-2} color="#fff"><path d="M.5.5h12v9H.5ZM.5 2.5h12M6.5 8.5v-4M4.5 6.5l2-2 2 2" /></Icon>
          <Icon w={10} h={1} ml={35} mt={-1} color="#fff"><path d="M0 .5h10" /></Icon>
          <Icon w={10} h={10} ml={36} mt={-2} color="#fff"><path d="M.5 2.5h7v7h-7ZM2.5 2V.5h7v7H8" /></Icon>
          <Icon w={10} h={10} ml={36} mt={-2} color="#fff"><path d="m.3.3 9.4 9.4M9.7.3.3 9.7" strokeWidth="1.2" /></Icon>
        </TitlePart>
      </TitleBar>

      <TabRow>
        {TABS.map(([label, ml, w, active]) => (
          <Tab key={label} $ml={ml} $w={w} $active={active}>
            <Text $size={13} $lh={19} $ls={active ? -0.2 : -0.35} $weight={active ? 600 : 400}>{label}</Text>
          </Tab>
        ))}
        <ShareButton $w={99} $ml={433}>
          <Icon w={12} h={12} color="#217346"><path d="M4 3.5H.5v8h9V9M3 8q.5-4 5-4V1.5L11.5 5 8 8V6Q5 6 3 8Z" /></Icon>
          <Text $ml={4} $size={13} $ls={-0.15} $weight={600}>Megosztás</Text>
        </ShareButton>
        <ShareButton $w={119} $ml={8}>
          <Icon w={12} h={11} color="#217346"><path d="M.5.5h11v7h-6L3 10V7.5H.5Z" /></Icon>
          <Text $ml={4} $size={13} $ls={-0.2} $weight={600}>Megjegyzések</Text>
        </ShareButton>
      </TabRow>

      <RibbonGroups />

      <FormulaBar>
        <Field $w={102} $pl={6}><NameText><Text $ls={0} $size={12.5}>P37</Text></NameText><Arrow d="down" mt={-2} color="#777" /></Field>
        <Dots ml={14} mt={8} />
        <Field $w={110} $ml={14} $pl={13}>
          <Icon w={11} h={11}><path d="m.5.5 10 10M10.5.5l-10 10" stroke="#bbb" strokeWidth="1.5" /></Icon>
          <Icon w={13} h={10} ml={24}><path d="m.8 5.5 3.7 3.5L12.3.8" stroke="#bbb" strokeWidth="2.2" /></Icon>
          <Fx>f<small>x</small></Fx>
        </Field>
        <Field $w={1111} $ml={3} $pl={1097}><Icon w={8} h={5} mt={-2}><path d="m.8.8 3.2 3 3.2-3" stroke="#666" strokeWidth="2" /></Icon></Field>
      </FormulaBar>

      <SheetArea>
        <SheetBox>
          <Grid>
            <Corner />
            {COLS.map(([c], i) => <ColHead key={i} $active={c === 'P'}>{c}</ColHead>)}
            {ROWS.map((_, i) => <SheetRow key={i} row={i + 1} />)}
          </Grid>
        </SheetBox>
        <VScroll>
          <ScrollButton><Arrow d="up" /></ScrollButton>
          <VThumb />
          <ScrollButton><Arrow d="down" /></ScrollButton>
        </VScroll>
      </SheetArea>

      <SheetTabs>
        <Arrow d="left" ml={26} mt={9} color="#bdbdbd" />
        <Arrow d="right" ml={25} mt={9} color="#bdbdbd" />
        <SheetTab><Text $size={12.5} $weight={700} $color="#217346" $ls={-0.2} $lh={17}>Munka1</Text></SheetTab>
        <Icon w={16} h={16} ml={33} mt={5} color="#777"><circle cx="8" cy="8" r="7.4" /><path d="M8 4v8M4 8h8" strokeWidth="1.8" /></Icon>
        <Dots ml={597} mt={8} />
        <HScroll>
          <ScrollButton><Arrow d="left" /></ScrollButton>
          <HThumb />
          <ScrollButton><Arrow d="right" /></ScrollButton>
        </HScroll>
      </SheetTabs>

      <StatusBar>
        <TitlePart $w={1066} $pl={8} $pb={1}><Text $size={11} $ls={-0.3}>Kész</Text></TitlePart>
        <ViewButton $active><Icon w={13} h={13}><path d="M.5.5h12v12H.5ZM0 4.5h13M0 8.5h13M4.5 0v13M8.5 0v13" strokeWidth="1.1" /></Icon></ViewButton>
        <ViewButton><Icon w={14} h={13}><path d="M.5.5h13v12H.5ZM3.5 2.5h7v8h-7ZM5 4.5h4M5 6.5h4M5 8.5h4" /></Icon></ViewButton>
        <ViewButton><Icon w={14} h={13}><path d="M.5.5h13v12H.5ZM.5 7.5h8V.5M4.5.5v7" strokeWidth="1.1" /></Icon></ViewButton>
        <Icon w={8} h={1} ml={5}><path d="M0 .5h8" /></Icon>
        <Icon w={100} h={11} ml={6}><path d="M0 5.5h100" stroke="#b0b0b0" /><path d="M48 0h5v11h-5Z" fill="#777" stroke="none" /></Icon>
        <Icon w={8} h={8} ml={5}><path d="M0 4h8M4 0v8" /></Icon>
        <Text $ml={13} $size={11} $ls={-0.3}>100%</Text>
      </StatusBar>
      <Taskbar />
    </Window>
  );
}
